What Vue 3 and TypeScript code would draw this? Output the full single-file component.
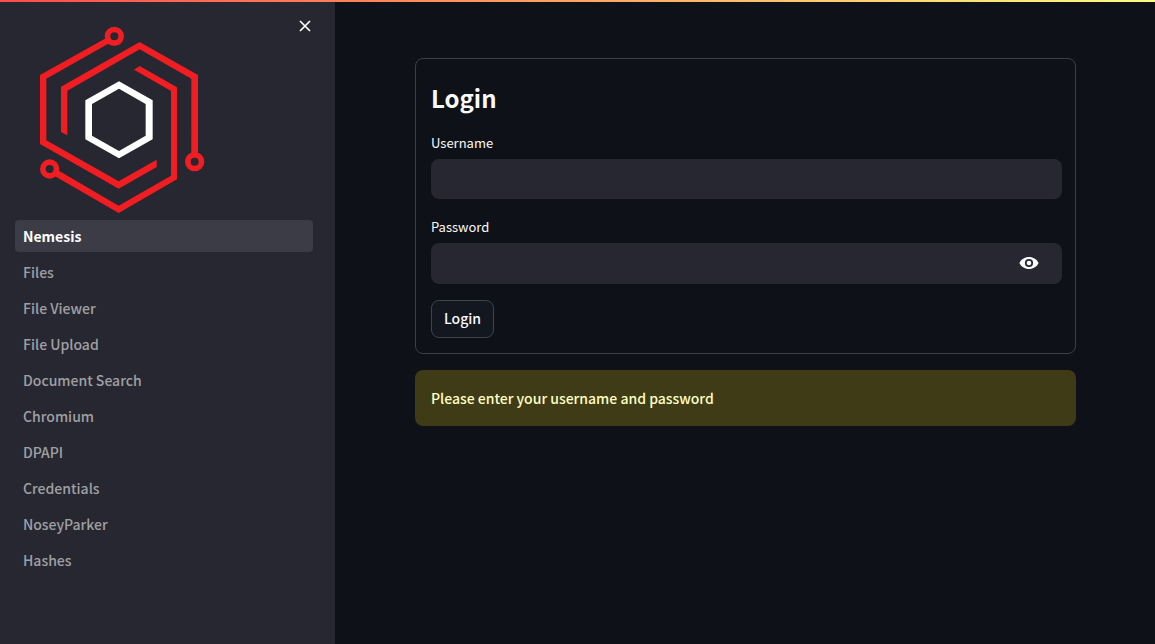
<script setup lang="ts">
import { ref } from 'vue'

const pages: string[] = [
  'Nemesis',
  'Files',
  'File Viewer',
  'File Upload',
  'Document Search',
  'Chromium',
  'DPAPI',
  'Credentials',
  'NoseyParker',
  'Hashes',
]
const current = ref('Nemesis')
const username = ref('')
const password = ref('')
const showPassword = ref(false)
const sidebarOpen = ref(true)
</script>

<template>
  <div class="app">
    <div class="decoration"></div>
    <aside v-if="sidebarOpen" class="sidebar">
      <button class="close" type="button" aria-label="Close sidebar" @click="sidebarOpen = false">
        <svg viewBox="0 0 12 12" width="12" height="12" aria-hidden="true">
          <path d="M1 1 11 11M11 1 1 11" fill="none" stroke="currentColor" stroke-width="1.7" />
        </svg>
      </button>
      <svg class="logo" viewBox="-15 30 600 600" role="img" aria-label="Nemesis logo">
        <g fill="#f01e23">
          <path d="M264 81 60 195V402L296 536 410 471V449L296 514 79 391V206L270 98Z" />
          <path d="M534 436V195L359 96 123 230V366L142 376V242L359 118 514 206V436Z" />
          <path d="M340 181 359 168 471 232V508L296 609 104 498 114 481 296 587 453 497V243L345 181Z" />
        </g>
        <g fill="none" stroke="#f01e23" stroke-width="17">
          <circle cx="283" cy="79" r="20.5" />
          <circle cx="524" cy="455" r="20.5" />
          <circle cx="89" cy="477" r="20.5" />
        </g>
        <path
          fill="#fff"
          fill-rule="evenodd"
          d="M297 214 398 271V388L297 445 196 388V271ZM297 236 216 282V377L297 423 377 377V282Z"
        />
      </svg>
      <nav class="nav" aria-label="Pages">
        <a
          v-for="page in pages"
          :key="page"
          href="#"
          :class="['nav-link', { active: page === current }]"
          :aria-current="page === current ? 'page' : undefined"
          @click.prevent="current = page"
        >{{ page }}</a>
      </nav>
    </aside>

    <main class="main">
      <form class="login" @submit.prevent>
        <h1 class="title">Login</h1>
        <div class="fields">
          <div class="field">
            <label for="username">Username</label>
            <div class="control">
              <input id="username" v-model="username" type="text" autocomplete="username" />
            </div>
          </div>
          <div class="field">
            <label for="password">Password</label>
            <div class="control with-action">
              <input
                id="password"
                v-model="password"
                :type="showPassword ? 'text' : 'password'"
                autocomplete="current-password"
              />
              <button
                class="reveal"
                type="button"
                aria-label="Show password"
                :aria-pressed="showPassword"
                @click="showPassword = !showPassword"
              >
                <svg viewBox="0 0 20 14" width="20" height="14" aria-hidden="true">
                  <path
                    fill="currentColor"
                    fill-rule="evenodd"
                    d="M10 1C5.7 1 2 3.500.4 7 2 10.500 5.700 13 10 13s8-2.500 9.600-6C18 3.500 14.300 1 10 1ZM10 11.100a4.100 4.100 0 1 1 0-8.200 4.100 4.100 0 0 1 0 8.200Z"
                  />
                  <circle cx="10" cy="7" r="2.300" fill="currentColor" />
                </svg>
              </button>
            </div>
          </div>
        </div>
        <button class="submit" type="submit">Login</button>
      </form>
      <div class="alert" role="alert">Please enter your username and password</div>
    </main>
  </div>
</template>

<style>
body {
  margin: 0;
  background: #0e1117;
}
</style>

<style scoped>
.app {
  position: relative;
  display: flex;
  min-height: 100vh;
  color: #fafafa;
  background: #0e1117;
  font-family: "Noto Sans CJK SC", "Noto Sans", sans-serif;
  font-size: 14px;
  font-weight: 500;
  line-height: 24px;
}

.app *,
.app {
  box-sizing: border-box;
}

.decoration {
  position: absolute;
  z-index: 1;
  top: 0;
  left: 0;
  right: 0;
  height: 2px;
  background: linear-gradient(90deg, #ff4b4b, #fffd80);
}

.sidebar {
  position: relative;
  flex: 0 0 335px;
  padding: 20px 22px 24px 15px;
  background: #262730;
}

.close {
  position: absolute;
  top: 16px;
  right: 20px;
  display: grid;
  place-items: center;
  width: 20px;
  height: 20px;
  padding: 0;
  border: 0;
  color: #fafafa;
  background: none;
}

.logo {
  display: block;
  width: 200px;
  height: 200px;
}

.nav {
  display: flex;
  flex-direction: column;
  gap: 4px;
}

.nav-link {
  padding: 4px 8px;
  border-radius: 4px;
  color: #a0a0a4;
  text-decoration: none;
}

.nav-link.active {
  color: #fff;
  background: #3c3c47;
  font-weight: 700;
}

.main {
  flex: 1;
  min-width: 0;
  display: flex;
  flex-direction: column;
  gap: 16px;
  padding: 58px 79px 58px 80px;
}

.login {
  display: flex;
  flex-direction: column;
  align-items: stretch;
  gap: 16px;
  padding: 15px 13px 15px 15px;
  border: 1px solid #3d3f44;
  border-radius: 8px;
}

.title {
  margin: 0;
  padding: 8px 0 5px;
  font-size: 24px;
  line-height: 32px;
  font-weight: 700;
}

.fields {
  display: flex;
  flex-direction: column;
  gap: 20px;
}

.field {
  display: flex;
  flex-direction: column;
  gap: 8px;
}

.field label {
  font-size: 13px;
  font-weight: 400;
  line-height: 16px;
}

.control {
  display: flex;
  height: 40px;
  border-radius: 8px;
  background: #262730;
}

.control.with-action {
  height: 41px;
}

.control input {
  flex: 1;
  min-width: 0;
  padding: 0 12px;
  border: 0;
  outline: 0;
  color: inherit;
  background: none;
  font: inherit;
}

.reveal {
  display: grid;
  place-items: center;
  width: 44px;
  height: 40px;
  margin-right: 11px;
  padding: 0;
  border: 0;
  color: #fafafa;
  background: none;
}

.submit {
  align-self: flex-start;
  height: 38px;
  padding: 0 12px 2px;
  border: 1px solid #41434a;
  border-radius: 8px;
  color: inherit;
  background: #131720;
  font: inherit;
}

.alert {
  padding: 16px;
  border-radius: 8px;
  color: #ffffc2;
  background: #3e3b16;
}
</style>
